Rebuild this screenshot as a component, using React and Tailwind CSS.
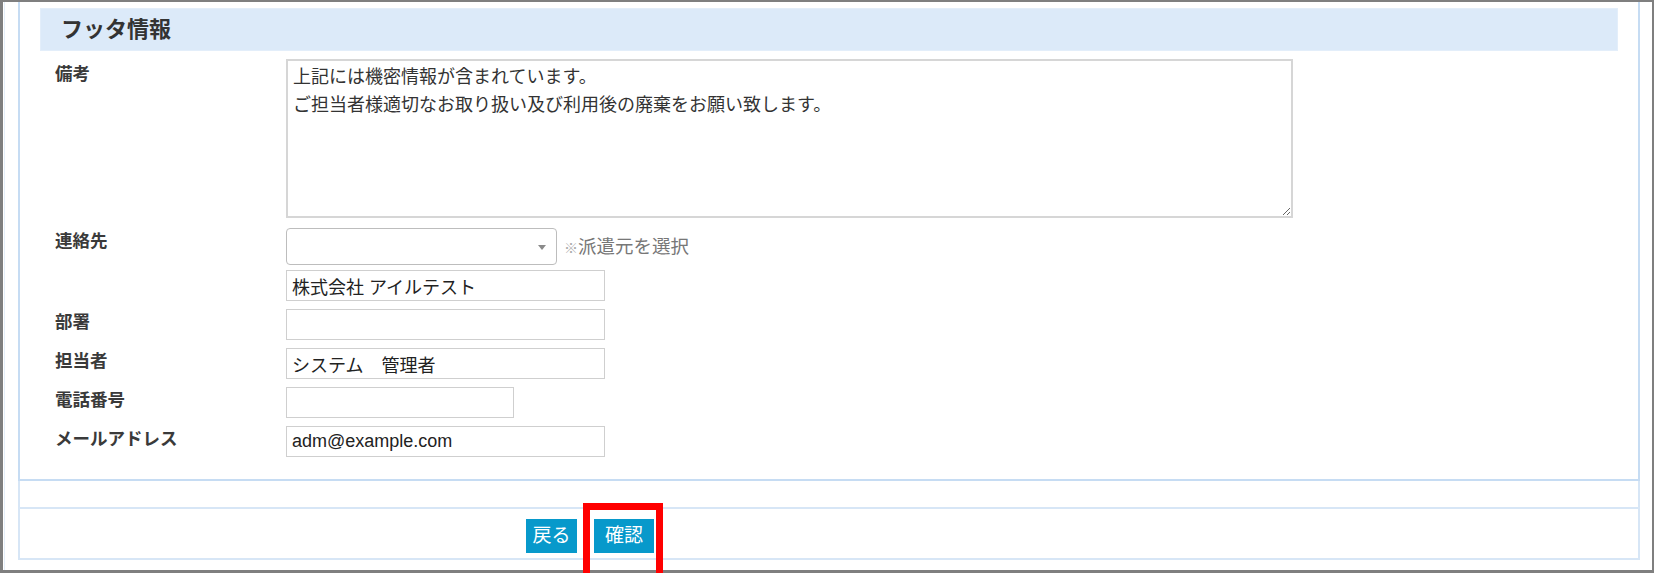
import { useState } from 'react'

const font = "font-['Liberation_Sans','Noto_Sans_CJK_JP',sans-serif]"

function Label({ children, className = '' }) {
  return (
    <div className={`w-[266px] shrink-0 pl-[35px] text-[17.5px] font-bold leading-[26px] text-[#3a3a3a] ${className}`}>
      {children}
    </div>
  )
}

function TextInput({ name, value, onChange, width = 'w-[319px]' }) {
  return (
    <input
      type="text"
      name={name}
      value={value}
      onChange={onChange}
      className={`${width} h-[31px] border border-[#cfcfcf] bg-white px-[5px] text-[18px] text-[#222] outline-none`}
    />
  )
}

export default function App() {
  const [form, setForm] = useState({
    note: '上記には機密情報が含まれています。\nご担当者様適切なお取り扱い及び利用後の廃棄をお願い致します。',
    contact: '',
    company: '株式会社 アイルテスト',
    dept: '',
    person: 'システム　管理者',
    tel: '',
    mail: 'adm@example.com',
  })

  const handleChange = (e) => {
    const { name, value } = e.target
    setForm(prev => ({ ...prev, [name]: value }))
  }

  return (
    <div className={`relative w-[1654px] h-[573px] overflow-hidden bg-white ${font}`}>
      <div className="h-full border-t-2 border-l-[3px] border-r-2 border-b-[3px] border-[#7f7f7f]">
        <div className="h-full ml-[1px] border-l border-[#e4eef9] pl-[13px]">

          {/* footer info fieldset */}
          <div className="w-[1622px] h-[479px] pt-[6px] border-x-2 border-b-2 border-[#c6dcf3]">
            <div className="mx-[20px] h-[43px] flex items-center pl-[20px] bg-[#dceaf9] border border-[#e3eefa]">
              <h2 className="text-[22px] font-bold text-[#333]">フッタ情報</h2>
            </div>

            <div className="flex mt-[8px]">
              <Label className="pt-[2px]">備考</Label>
              <textarea
                name="note"
                value={form.note}
                onChange={handleChange}
                className="w-[1007px] h-[159px] border-2 border-[#d6d6d6] px-[5px] pt-[2px] text-[18px] leading-[28px] text-[#333] outline-none"
              />
            </div>

            <div className="flex mt-[10px]">
              <Label>連絡先</Label>
              <div className="flex flex-col gap-[5px]">
                <div className="flex items-center">
                  <div className="relative w-[271px] h-[37px] rounded-[4px] border border-[#bdbdbd] bg-white">
                    <select
                      name="contact"
                      value={form.contact}
                      onChange={handleChange}
                      className="w-full h-full appearance-none bg-transparent px-[6px] outline-none"
                    >
                      <option value=""></option>
                    </select>
                    <span className="pointer-events-none absolute right-[10px] top-[16px] border-x-4 border-t-[5px] border-x-transparent border-t-[#8a8a8a]" />
                  </div>
                  <span className="ml-[7px] text-[18.5px] text-[#777]">
                    <span className="text-[14px] text-[#aaa]">※</span>派遣元を選択
                  </span>
                </div>
                <TextInput name="company" value={form.company} onChange={handleChange} />
              </div>
            </div>

            <div className="flex mt-[8px]">
              <Label>部署</Label>
              <TextInput name="dept" value={form.dept} onChange={handleChange} />
            </div>

            <div className="flex mt-[8px]">
              <Label>担当者</Label>
              <TextInput name="person" value={form.person} onChange={handleChange} />
            </div>

            <div className="flex mt-[8px]">
              <Label>電話番号</Label>
              <TextInput name="tel" value={form.tel} onChange={handleChange} width="w-[228px]" />
            </div>

            <div className="flex mt-[8px]">
              <Label>メールアドレス</Label>
              <TextInput name="mail" value={form.mail} onChange={handleChange} />
            </div>
          </div>

          <div className="w-[1622px] h-[28px] border-x-2 border-b-2 border-[#d7e6f6]" />

          <div className="w-[1622px] h-[51px] border-x-2 border-b-2 border-[#d7e6f6] flex items-start gap-[17px] pt-[10px] pl-[506px]">
            <button type="button" className="h-[34px] w-[51px] bg-[#0799cb] text-[19px] text-white">戻る</button>
            <button type="button" className="h-[34px] w-[60px] bg-[#0799cb] text-[19px] text-white">確認</button>
          </div>
        </div>
      </div>

      {/* highlight around the confirm button */}
      <div className="absolute left-[583px] top-[503px] w-[80px] h-[80px] border-[7px] border-[#ff0000]" />
    </div>
  )
}
